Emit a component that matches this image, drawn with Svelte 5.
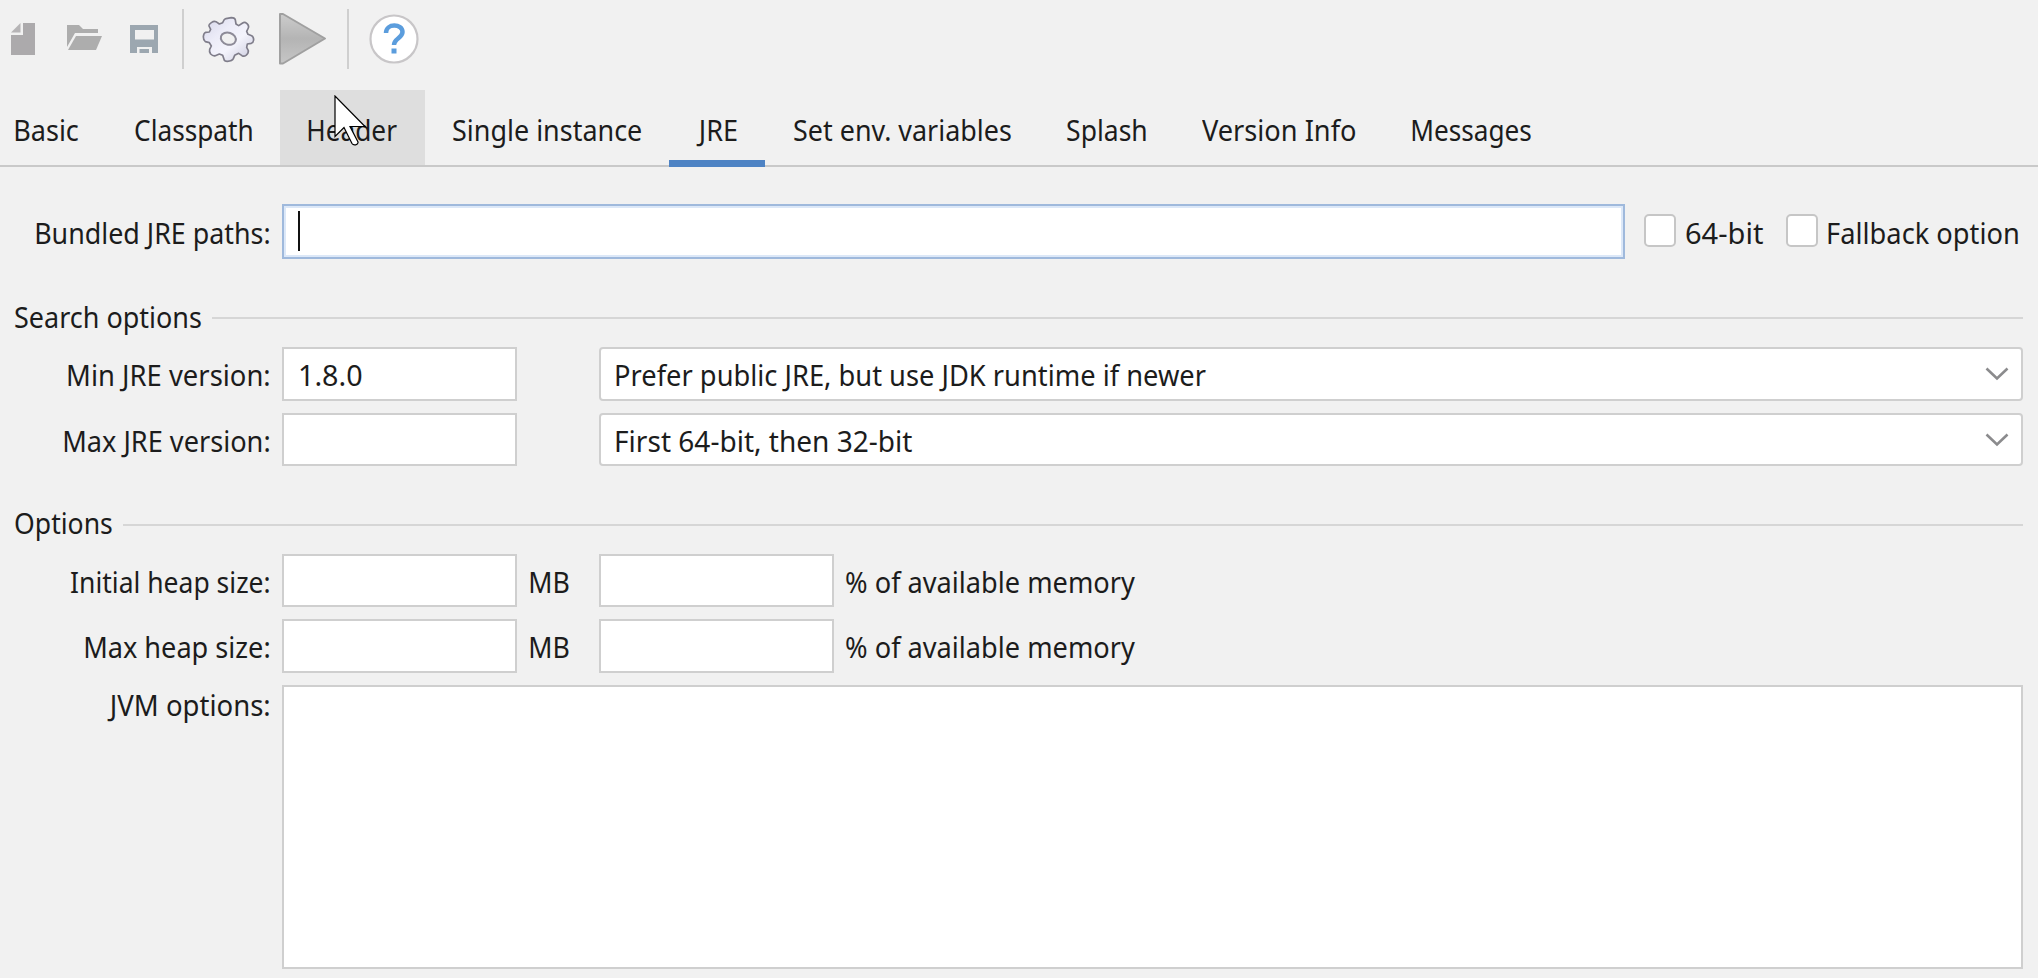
<script>
  const tabs = [
    { name: 'Basic', w: 63 },
    { name: 'Classpath', w: 117 },
    { name: 'Header', w: 89, hover: true },
    { name: 'Single instance', w: 188 },
    { name: 'JRE', w: 41, active: true },
    { name: 'Set env. variables', w: 217 },
    { name: 'Splash', w: 79 },
    { name: 'Version Info', w: 153 },
    { name: 'Messages', w: 119 },
  ];
  const versions = [
    { label: 'Min JRE version:', w: 201, value: '1.8.0', choice: 'Prefer public JRE, but use JDK runtime if newer', cw: 590 },
    { label: 'Max JRE version:', w: 205, value: '', choice: 'First 64-bit, then 32-bit', cw: 296 },
  ];
  const heaps = [
    { label: 'Initial heap size:', w: 198 },
    { label: 'Max heap size:', w: 184 },
  ];

  // Condenses a label so that its ink spans exactly w pixels.
  function fit(node, w) {
    const style = getComputedStyle(node);
    const ctx = document.createElement('canvas').getContext('2d');
    ctx.font = `${style.fontSize} ${style.fontFamily}`;
    const m = ctx.measureText(node.textContent);
    const s = w / (m.actualBoundingBoxLeft + m.actualBoundingBoxRight);
    node.style.transform = `translateX(${m.actualBoundingBoxLeft * s}px) scaleX(${s})`;
  }
</script>

{#snippet label(text, w)}<span class="label" style="width:{w}px" use:fit={w}>{text}</span>{/snippet}

<div class="window">
  <header class="toolbar">
    <svg class="file" width="24" height="34" viewBox="0 0 24 34"><path d="M12 1h12v32H0V13h12z" fill="#acaaac"/><path d="M9.500 1v9.500H0z" fill="#b6b4b6"/></svg>
    <svg class="folder" width="36" height="27" viewBox="0 0 36 27"><path d="M0 1h12l4 4h15v4H8L0 23z" fill="#adadad"/><path d="M9 12h26l-6 14H1z" fill="#adadad"/></svg>
    <svg class="save" width="28" height="28" viewBox="0 0 28 28"><path fill-rule="evenodd" d="M0 0h28v28h-6v-6H7v6H0zM5 5v9.500h19V5z" fill="#9ca7b0"/><path d="M9.500 24h9.500v4H9.500z" fill="#9ca7b0"/></svg>
    <i class="sep"></i>
    <svg class="gear" width="62" height="58" viewBox="0 0 186 174">
      <defs><linearGradient id="metal" x1="0" y1="0" x2="1" y2="1"><stop offset="0" stop-color="#d6d6ea"/><stop offset=".35" stop-color="#ececf8"/><stop offset=".6" stop-color="#f4f4fc"/><stop offset="1" stop-color="#c6c6da"/></linearGradient></defs>
      <path d="M84 26L100 23Q111 23 112 30L114 42 122 47 134 39Q140 35 147 41 154 48 151 54L146 64 150 73 161 77Q167 80 167 90 166 98 160 100L148 102 146 112 151 122Q152 130 144 136 138 140 132 137L122 130 110 136 106 146Q103 153 88 154 79 154 78 148L74 136 64 132 52 137Q45 139 38 132 33 124 35 118L40 108 34 98 22 95Q16 91 16 80 17 69 23 67L34 66 38 58 33 48Q32 43 41 37 48 32 54 35L64 42 74 38 78 30Q80 27 84 26z" fill="url(#metal)" stroke="#7f7d8a" stroke-width="5" stroke-linejoin="round"/>
      <ellipse cx="91" cy="86" rx="23" ry="18" fill="#f0f0f1" stroke="#8d8b98" stroke-width="6" transform="rotate(18 91 86)"/>
    </svg>
    <svg class="play" width="50" height="54" viewBox="0 0 50 54">
      <defs><linearGradient id="steel" x1="0" y1="0" x2="0" y2="1"><stop offset="0" stop-color="#cccccc"/><stop offset=".5" stop-color="#b4b4b4"/><stop offset="1" stop-color="#c6c6c6"/></linearGradient></defs>
      <path d="M2 2l3 0L47 26.500 5 51.500H2z" fill="url(#steel)" stroke="#a0a0a0" stroke-width="2" stroke-linejoin="round"/>
    </svg>
    <i class="sep"></i>
    <svg class="help" width="50" height="50" viewBox="0 0 50 50"><circle cx="25" cy="25" r="23.500" fill="#fff" stroke="#c8c6c8" stroke-width="2.200"/><path d="M17 19c0-10 16.500-9.500 16.500-1 0 6-8.500 6.500-8.500 13" fill="none" stroke="#5b9ddd" stroke-width="4.500"/><path d="M22.500 34.500h5v5h-5z" fill="#5b9ddd"/></svg>
  </header>

  <nav class="tabs">
    {#each tabs as t}
      <div class="tab" class:hover={t.hover} class:active={t.active}>{@render label(t.name, t.w)}</div>
    {/each}
    <svg class="pointer" width="34" height="52" viewBox="0 0 34 52"><path d="M1 1v40.500l9-9L18 48.500c1.500 2.500 6.500 1.500 6-1.500L16 31.500h15z" fill="#fff" stroke="#000" stroke-width="1.200"/></svg>
  </nav>

  <main>
    <div class="row bundled">
      <div class="caption">{@render label('Bundled JRE paths:', 233)}</div>
      <div class="path"><i class="caret"></i></div>
      <div class="check"><i></i>{@render label('64-bit', 77)}</div>
      <div class="check second"><i></i>{@render label('Fallback option', 190)}</div>
    </div>

    <div class="section">{@render label('Search options', 186)}<hr /></div>
    {#each versions as v}
      <div class="row">
        <div class="caption">{@render label(v.label, v.w)}</div>
        <div class="field">{#if v.value}{@render label(v.value, 62)}{/if}</div>
        <div class="unit"></div>
        <div class="combo">{@render label(v.choice, v.cw)}<svg width="24" height="16" viewBox="0 0 24 16"><path d="M1.500 2.500L12 12.500 22.500 2.500" fill="none" stroke="#8b8b8d" stroke-width="2.600"/></svg></div>
      </div>
    {/each}

    <div class="section options">{@render label('Options', 97)}<hr /></div>
    {#each heaps as h}
      <div class="row">
        <div class="caption">{@render label(h.label, h.w)}</div>
        <div class="field"></div>
        <div class="unit">{@render label('MB', 39)}</div>
        <div class="field"></div>
        <div class="percent">{@render label('% of available memory', 289)}</div>
      </div>
    {/each}
    <div class="row jvm">
      <div class="caption">{@render label('JVM options:', 162)}</div>
      <div class="area"></div>
    </div>
  </main>
</div>

<style>
  :global(body) { margin: 0; background: #f1f1f1; }
  .window {
    box-sizing: border-box;
    width: 2038px;
    height: 978px;
    overflow: hidden;
    background: #f1f1f1;
    color: #1c1c1c;
    font: 29px/40px 'Noto Sans', sans-serif;
  }
  .label { display: inline-block; flex: none; white-space: nowrap; transform-origin: left center; }

  .toolbar { display: flex; align-items: flex-start; height: 90px; padding-left: 11px; box-sizing: border-box; }
  .toolbar svg { flex: none; }
  .file { margin-top: 22px; }
  .folder { margin: 24px 0 0 32px; }
  .save { margin: 25px 0 0 27px; }
  .sep { width: 2px; height: 60px; margin: 9px 0 0 24px; background: #cfcfcf; }
  .gear { margin: 10px 0 0 14px; }
  .play { margin: 12px 0 0 18px; }
  .play + .sep { margin-left: 19px; }
  .help { margin: 14px 0 0 20px; }

  .tabs { position: relative; display: flex; height: 75px; margin-left: -13px; border-bottom: 2px solid #c9c9c9; }
  .tab { display: flex; padding: 20px 28px 0; }
  .tab:nth-child(2) { margin-left: 1px; }
  .tab.hover { background: #dedede; }
  .tab.active { height: 50px; margin-bottom: -2px; padding: 20px 28px 0 27px; border-bottom: 7px solid #4e83c4; }
  .tab.active + .tab { margin-left: 1px; }
  .tab:last-of-type { margin-left: 1px; }
  .pointer { position: absolute; left: 347px; top: 5px; }

  main { padding: 37px 15px 0 15px; }
  .row { display: flex; height: 53.500px; margin-bottom: 12px; }
  .caption { display: flex; justify-content: flex-end; width: 254px; margin-right: 13px; padding-top: 8px; flex: none; }
  .field { box-sizing: border-box; display: flex; width: 235px; border: 2px solid #cfcfcf; background: #fff; padding: 6px 0 0 16px; flex: none; }
  .unit { width: 82px; padding: 8px 0 0 13px; box-sizing: border-box; flex: none; }
  .percent { padding: 8px 0 0 12px; }
  .combo { box-sizing: border-box; display: flex; justify-content: space-between; flex: 1; border: 2px solid #cfcfcf; border-radius: 4px; background: #fff; padding: 6px 12px 0 15px; }
  .combo svg { margin-top: 11px; }

  .bundled { height: 55px; margin-bottom: 38px; }
  .bundled .caption { padding-top: 9px; }
  .path { box-sizing: border-box; width: 1343px; border: 2px solid #9fb9dc; box-shadow: inset 0 0 0 2px #dce8f8; background: #fff; padding: 5px 0 0 14px; }
  .caret { display: block; width: 2px; height: 40px; background: #111; }
  .check { display: flex; padding-top: 9px; margin-left: 19px; }
  .check i { box-sizing: border-box; width: 32px; height: 33px; margin: 1px 10px 0 0; border: 2px solid #c6c6c6; border-radius: 5px; background: #fff; }
  .check.second { margin-left: 23px; }

  .section { display: flex; align-items: flex-start; height: 50px; }
  .section hr { flex: 1; height: 2px; margin: 20px 0 0 11px; border: 0; background: #d6d6d6; }
  .options { margin-top: 37.500px; }
  .options .label { margin-top: -1px; }
  .jvm { height: 284px; margin: 0; }
  .jvm .caption { padding-top: 0; }
  .area { box-sizing: border-box; flex: 1; border: 2px solid #cfcfcf; background: #fff; }
</style>
